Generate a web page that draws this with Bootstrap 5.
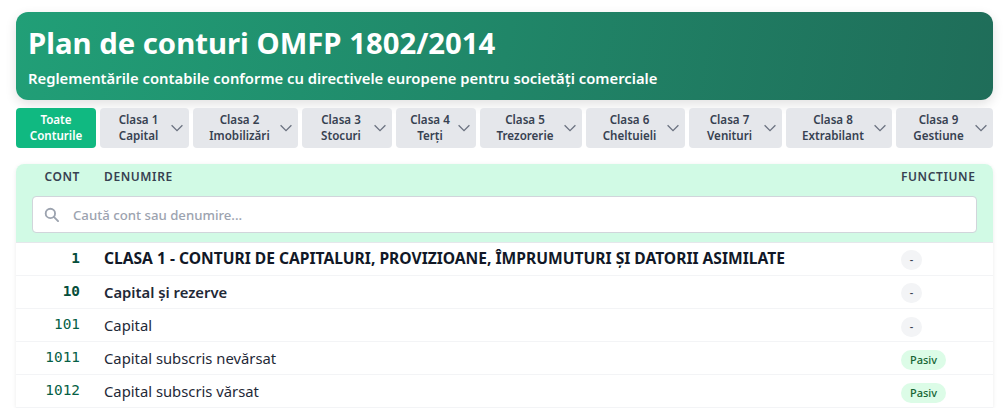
<!DOCTYPE html>
<html lang="ro">
<head>
  <meta charset="UTF-8">
  <meta name="viewport" content="width=device-width, initial-scale=1.0">
  <title>Plan de conturi</title>
  <link href="https://cdn.jsdelivr.net/npm/bootstrap@5.3.0/dist/css/bootstrap.min.css" rel="stylesheet">
  <style>
    body {
      font-family: "Noto Sans", sans-serif;
      background-color: #fff;
      color: #1f2937;
      overflow: hidden;
      height: 408px;
    }
    .page-wrap {
      padding: 12px 12px 0 16px;
    }
    .hero {
      height: 88px;
      padding: 11px 12px 0;
      color: #fff;
      border-radius: 12px;
      background: linear-gradient(100deg, #219f77 0%, #1f6d59 100%);
      box-shadow: 0 4px 12px rgba(0,0,0,0.12);
    }
    .hero h1 {
      font-size: 29.3px;
      line-height: 40px;
      font-weight: 700;
      margin: 0 0 5px;
    }
    .hero p {
      font-size: 14.8px;
      line-height: 20px;
      font-weight: 600;
      margin: 0;
    }
    .class-bar {
      margin-top: 8px;
      gap: 4px;
    }
    .class-btn {
      height: 40px;
      border: 0;
      border-radius: 4px;
      background-color: #e5e7eb;
      color: #374151;
      font-size: 11.6px;
      font-weight: 600;
      line-height: 16px;
      padding: 0 6px 0 0;
      flex: 0 0 auto;
      display: flex;
      align-items: center;
      text-align: center;
    }
    .class-btn span {
      flex: 1;
    }
    .class-btn.all {
      background-color: #10b981;
      color: #fff;
      width: 80px;
      padding: 0;
      justify-content: center;
    }
    .class-btn svg {
      width: 12px;
      height: 12px;
      margin-left: -6px;
      color: #6b7280;
      flex: none;
    }
    .w-89 { width: 89px; } .w-105 { width: 105px; } .w-90 { width: 90px; }
    .w-80 { width: 80px; } .w-102 { width: 102px; } .w-99 { width: 99px; }
    .w-93 { width: 93px; } .w-106 { width: 106px; } .w-97 { width: 97px; }
    .table-box {
      margin-top: 16px;
      border-radius: 8px 8px 0 0;
      box-shadow: 0 1px 4px rgba(0,0,0,0.08);
      overflow: hidden;
    }
    .plan-table {
      table-layout: fixed;
      width: 100%;
      margin: 0;
      border-collapse: collapse;
    }
    .plan-table th {
      background-color: #d1fae5;
      color: #374151;
      font-size: 12px;
      font-weight: 600;
      letter-spacing: 0.6px;
      line-height: 16px;
      padding: 5px 16px 6px;
      border: 0;
    }
    .plan-table th.search-cell {
      padding: 5px 16px 9px;
      font-weight: 400;
      letter-spacing: 0;
      border-bottom: 1px solid #e5e7eb;
    }
    .plan-table td {
      height: 33px;
      padding: 0 16px;
      font-size: 14.8px;
      color: #1f2937;
      border: 0;
      border-bottom: 1px solid #f3f4f6;
      vertical-align: middle;
    }
    .plan-table .code-col {
      width: 72px;
      padding-left: 0;
      padding-right: 8px;
      text-align: right;
    }
    .plan-table .fn-col {
      width: 108px;
    }
    .plan-table td.code-col {
      font-family: "DejaVu Sans Mono", monospace;
      font-size: 14.4px;
      color: #065f46;
    }
    .search-box {
      position: relative;
    }
    .search-box svg {
      position: absolute;
      left: 12px;
      top: 11px;
      width: 15px;
      height: 15px;
      color: #9ca3af;
    }
    .search-box .form-control {
      height: 37px;
      border: 1px solid #d1d5db;
      border-radius: 4px;
      padding: 0 12px 0 40px;
      font-size: 13.2px;
      font-weight: 500;
    }
    .search-box .form-control::placeholder {
      color: #9ca3af;
    }
    .plan-table .row-top td { font-weight: 700; font-size: 15.6px; color: #111827; }
    .plan-table .row-top td.code-col { font-weight: 700; font-size: 14.4px; color: #064e3b; }
    .plan-table .row-group td { font-weight: 600; }
    .plan-table .row-group td.code-col { font-weight: 700; color: #064e3b; }
    .plan-table td .fn-pill {
      display: inline-block;
      min-width: 21px;
      height: 20px;
      line-height: 20px;
      padding: 0 9px;
      border-radius: 10px;
      font-size: 11px;
      font-weight: 500;
      text-align: center;
      vertical-align: middle;
    }
    .plan-table td .fn-none {
      background-color: #f3f4f6;
      color: #374151;
      padding: 0;
    }
    .fn-pasiv {
      background-color: #dcfce7;
      color: #166534;
    }
  </style>
</head>
<body>
  <div class="page-wrap">
    <div class="hero">
      <h1>Plan de conturi OMFP 1802/2014</h1>
      <p>Reglementările contabile conforme cu directivele europene pentru societăți comerciale</p>
    </div>

    <div class="d-flex class-bar">
      <button type="button" class="class-btn all">Toate<br>Conturile</button>
      <button type="button" class="class-btn w-89"><span>Clasa 1<br>Capital</span><svg viewBox="0 0 12 12" fill="none" stroke="currentColor" stroke-width="1.3"><path d="M.6 3.2L6 8.6l5.4-5.4"/></svg></button>
      <button type="button" class="class-btn w-105"><span>Clasa 2<br>Imobilizări</span><svg viewBox="0 0 12 12" fill="none" stroke="currentColor" stroke-width="1.3"><path d="M.6 3.2L6 8.6l5.4-5.4"/></svg></button>
      <button type="button" class="class-btn w-90"><span>Clasa 3<br>Stocuri</span><svg viewBox="0 0 12 12" fill="none" stroke="currentColor" stroke-width="1.3"><path d="M.6 3.2L6 8.6l5.4-5.4"/></svg></button>
      <button type="button" class="class-btn w-80"><span>Clasa 4<br>Terți</span><svg viewBox="0 0 12 12" fill="none" stroke="currentColor" stroke-width="1.3"><path d="M.6 3.2L6 8.6l5.4-5.4"/></svg></button>
      <button type="button" class="class-btn w-102"><span>Clasa 5<br>Trezorerie</span><svg viewBox="0 0 12 12" fill="none" stroke="currentColor" stroke-width="1.3"><path d="M.6 3.2L6 8.6l5.4-5.4"/></svg></button>
      <button type="button" class="class-btn w-99"><span>Clasa 6<br>Cheltuieli</span><svg viewBox="0 0 12 12" fill="none" stroke="currentColor" stroke-width="1.3"><path d="M.6 3.2L6 8.6l5.4-5.4"/></svg></button>
      <button type="button" class="class-btn w-93"><span>Clasa 7<br>Venituri</span><svg viewBox="0 0 12 12" fill="none" stroke="currentColor" stroke-width="1.3"><path d="M.6 3.2L6 8.6l5.4-5.4"/></svg></button>
      <button type="button" class="class-btn w-106"><span>Clasa 8<br>Extrabilant</span><svg viewBox="0 0 12 12" fill="none" stroke="currentColor" stroke-width="1.3"><path d="M.6 3.2L6 8.6l5.4-5.4"/></svg></button>
      <button type="button" class="class-btn w-97"><span>Clasa 9<br>Gestiune</span><svg viewBox="0 0 12 12" fill="none" stroke="currentColor" stroke-width="1.3"><path d="M.6 3.2L6 8.6l5.4-5.4"/></svg></button>
    </div>

    <div class="table-box">
      <table class="plan-table">
        <thead>
          <tr>
            <th class="code-col">CONT</th>
            <th>DENUMIRE</th>
            <th class="fn-col">FUNCTIUNE</th>
          </tr>
          <tr>
            <th colspan="3" class="search-cell">
              <div class="search-box">
                <svg viewBox="0 0 16 16" fill="none" stroke="currentColor" stroke-width="2"><circle cx="6.8" cy="6.8" r="5"/><path d="M10.5 10.5l4.5 4.5" stroke-linecap="round"/></svg>
                <input type="text" class="form-control" placeholder="Caută cont sau denumire...">
              </div>
            </th>
          </tr>
        </thead>
        <tbody>
          <tr class="row-top"><td class="code-col">1</td><td>CLASA 1 - CONTURI DE CAPITALURI, PROVIZIOANE, ÎMPRUMUTURI ŞI DATORII ASIMILATE</td><td><span class="fn-pill fn-none">-</span></td></tr>
          <tr class="row-group"><td class="code-col">10</td><td>Capital şi rezerve</td><td><span class="fn-pill fn-none">-</span></td></tr>
          <tr><td class="code-col">101</td><td>Capital</td><td><span class="fn-pill fn-none">-</span></td></tr>
          <tr><td class="code-col">1011</td><td>Capital subscris nevărsat</td><td><span class="fn-pill fn-pasiv">Pasiv</span></td></tr>
          <tr><td class="code-col">1012</td><td>Capital subscris vărsat</td><td><span class="fn-pill fn-pasiv">Pasiv</span></td></tr>
        </tbody>
      </table>
    </div>
  </div>

  <script src="https://cdn.jsdelivr.net/npm/bootstrap@5.3.0/dist/js/bootstrap.bundle.min.js"></script>
</body>
</html>
